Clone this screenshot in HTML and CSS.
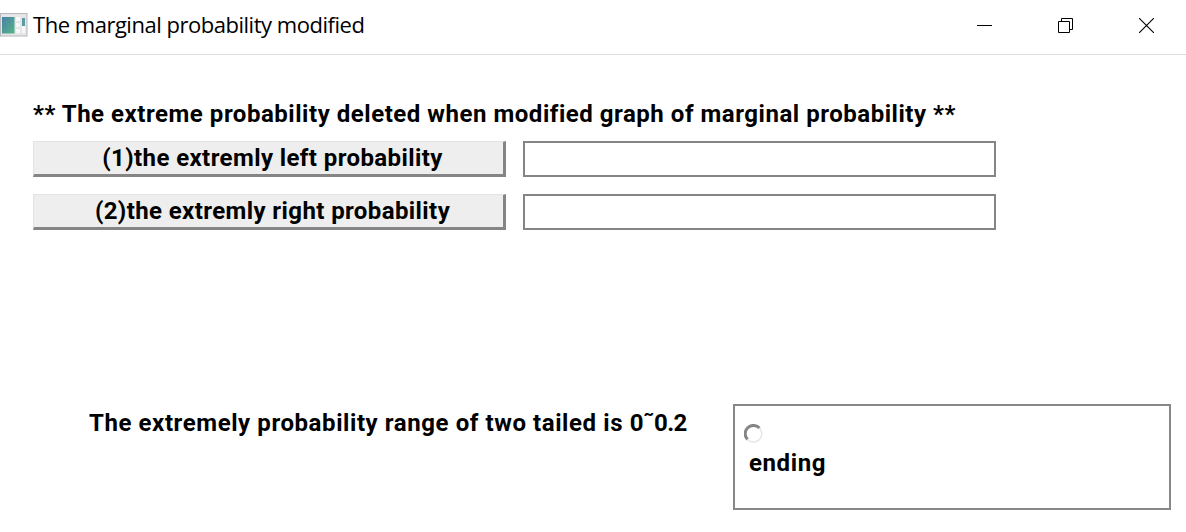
FILE: index.html
```html
<!DOCTYPE html>
<html lang="en">
<head>
<meta charset="utf-8">
<title>The marginal probability modified</title>
<link rel="stylesheet" href="styles.css">
</head>
<body>
<header class="titlebar">
  <svg class="app-icon" width="28" height="24" viewBox="0 0 28 24">
    <defs><linearGradient id="pane" x1="0" y1="0" x2="1" y2="1"><stop offset="0" stop-color="#4a80a8"/><stop offset="1" stop-color="#55b487"/></linearGradient></defs>
    <rect x="0.5" y="0.5" width="26.5" height="22.5" fill="#e6e6e9" stroke="#b5b7bb"/>
    <rect x="2" y="4" width="12.500" height="16.500" fill="url(#pane)"/>
    <path d="M16 4h4v4h-4zM16 10h4v4h-4zM16 16h4v4h-4zM22 13h3v7h-3z" fill="#f8f8f8"/>
    <rect x="22" y="5" width="3" height="8" fill="#5a9ba5"/>
  </svg>
  <h1 class="title">The marginal probability modified</h1>
  <div class="controls">
    <svg width="15" height="15" viewBox="0 0 15 15"><path d="M0 7.5h15" stroke="#000"/></svg>
    <svg width="15" height="15" viewBox="0 0 15 15"><path d="M.5 3.5h11v11H.5zM3.500 3.500v-3h11v11h-3" fill="none" stroke="#000"/></svg>
    <svg width="15" height="15" viewBox="0 0 15 15"><path d="M0 0l15 15M15 0L0 15" stroke="#000" stroke-width="1.100"/></svg>
  </div>
</header>
<main class="content">
  <p class="heading">** The extreme probability deleted when modified graph of marginal probability **</p>
  <div class="fields">
    <button class="push left"><span>(1)the extremly left probability</span></button>
    <input class="entry" type="text" aria-label="left probability">
    <button class="push right"><span>(2)the extremly right probability</span></button>
    <input class="entry" type="text" aria-label="right probability">
  </div>
  <section class="bottom">
    <p class="note">The extremely probability range of two tailed is <span class="range">0˜0.2</span></p>
    <div class="group">
      <svg class="radio" width="20" height="20" viewBox="0 0 20 20">
        <path d="M3.500 15.500A8 8 0 0 1 15.500 4" fill="none" stroke="#858585" stroke-width="3"/>
        <path d="M15.500 4A8 8 0 0 1 3.500 15.500" fill="none" stroke="#e5e5e5" stroke-width="1.500"/>
      </svg>
      <span class="option">ending</span>
    </div>
  </section>
</main>
</body>
</html>
```
FILE: styles.css
```css
* { box-sizing: border-box; }
body { margin: 0; width: 1186px; height: 532px; overflow: hidden; background: #fff; color: #000; font: bold 24px/30px Roboto, sans-serif; }
p, h1 { margin: 0; white-space: nowrap; }
.titlebar { height: 55px; border-bottom: 1px solid #dcdcdc; display: flex; align-items: flex-start; }
.app-icon { margin-top: 13px; flex: none; }
.title { margin: 9px 0 0 5px; font: 400 22px/30px "Open Sans", "Noto Sans", sans-serif; letter-spacing: -0.48px; }
.controls { margin: 18px 32px 0 auto; display: flex; gap: 66px; }
.content { padding: 44px 0 0 33px; }
.heading { letter-spacing: 0.53px; }
.fields { margin-top: 12px; display: grid; grid-template-columns: 473px 473px; gap: 17px; }
.push { height: 36px; padding: 0 0 0 8px; border: solid; border-color: #e3e3e3 #858585 #858585 #e3e3e3; border-width: 1px 3px 3px 1px; background: #eee; font: inherit; color: inherit; letter-spacing: 0.4px; white-space: nowrap; }
.entry { width: 473px; height: 36px; border: 2px solid #858585; background: #fff; padding: 0 6px; font: inherit; }
.bottom { display: flex; margin: 174px 0 0 56px; }
.note { width: 644px; margin-top: 4px; letter-spacing: 0.58px; }
.range { letter-spacing: -0.5px; }
.group { width: 438px; height: 106px; border: 2px solid #888; padding: 18px 0 0 9px; display: flex; flex-direction: column; }
.option { margin: 4px 0 0 5px; letter-spacing: 0.6px; }
```
